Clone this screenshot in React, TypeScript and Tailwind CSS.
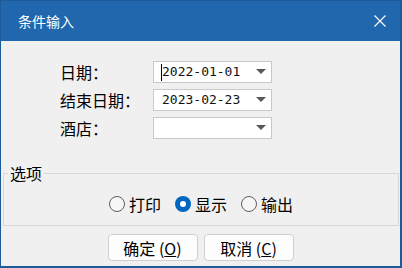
import React from "react";

const rows = [
  { label: "日期：", value: "2022-01-01", caret: true },
  { label: "结束日期：", value: "2023-02-23", caret: false },
  { label: "酒店：", value: "", caret: false },
];

const radios = [
  { label: "打印", checked: false },
  { label: "显示", checked: true },
  { label: "输出", checked: false },
];

function Radio({ checked }: { checked: boolean }) {
  if (checked) {
    return (
      <span className="w-[16px] h-[16px] rounded-full bg-[#0067c0] flex items-center justify-center">
        <span className="w-[6px] h-[6px] rounded-full bg-white" />
      </span>
    );
  }
  return <span className="w-[16px] h-[16px] rounded-full border border-[#5f5f5f] bg-[#f6f6f6]" />;
}

function Combo({ value, caret }: { value: string; caret: boolean }) {
  return (
    <div className="h-[22px] border border-[#c8c8c8] bg-white flex items-center justify-between pl-[7px] pr-[5px]">
      <div className="flex items-center font-['DejaVu_Sans_Mono',monospace] text-[13px] text-[#111]">
        {caret ? <span className="w-[1px] h-[17px] bg-black" /> : <span className="w-[1px]" />}
        <span>{value}</span>
      </div>
      <svg width="10" height="6" viewBox="0 0 10 6">
        <path d="M0 0 L10 0 L5 5 Z" fill="#545a54" />
      </svg>
    </div>
  );
}

export default function App() {
  return (
    <div className="w-[402px] h-[268px] bg-[#f0f0f0] border-l border-t border-r-2 border-b-2 border-[#1c5a98] flex flex-col font-['Noto_Sans_CJK_SC','Noto_Sans',sans-serif] text-black">
      <div className="h-[40px] shrink-0 bg-[#2067ad] flex items-center justify-between pl-[17px] pr-[14px]">
        <span className="text-white text-[14px] leading-none">条件输入</span>
        <svg width="12" height="12" viewBox="0 0 12 12">
          <path d="M0.5 0.5 L11.5 11.5 M11.5 0.5 L0.5 11.5" stroke="white" strokeWidth="1.2" />
        </svg>
      </div>

      <div className="flex-1 flex flex-col">
        <div className="grid grid-cols-[93px_119px] gap-y-[6px] ml-[59px] mt-[20px]">
          {rows.map((r) => (
            <React.Fragment key={r.label}>
              <div className="h-[22px] flex items-center text-[16px] leading-none">{r.label}</div>
              <Combo value={r.value} caret={r.caret} />
            </React.Fragment>
          ))}
        </div>

        <fieldset className="ml-[2px] mr-[1px] mt-[24px] border border-[#d8d8d8]">
          <legend className="ml-[4px] px-[2px] text-[16px] leading-[20px]">选项</legend>
          <div className="h-[42px] flex items-center justify-center gap-[14px]">
            {radios.map((r) => (
              <div key={r.label} className="flex items-center gap-[4px]">
                <Radio checked={r.checked} />
                <span className="text-[16px] leading-none">{r.label}</span>
              </div>
            ))}
          </div>
        </fieldset>

        <div className="mt-[8px] flex justify-center gap-[6px]">
          <button className="w-[90px] h-[27px] rounded-[4px] border border-[#d0d0d0] bg-[#fdfdfd] text-[16px] leading-none">
            确定 (<u>O</u>)
          </button>
          <button className="w-[90px] h-[27px] rounded-[4px] border border-[#d0d0d0] bg-[#fdfdfd] text-[16px] leading-none">
            取消 (<u>C</u>)
          </button>
        </div>
      </div>
    </div>
  );
}
